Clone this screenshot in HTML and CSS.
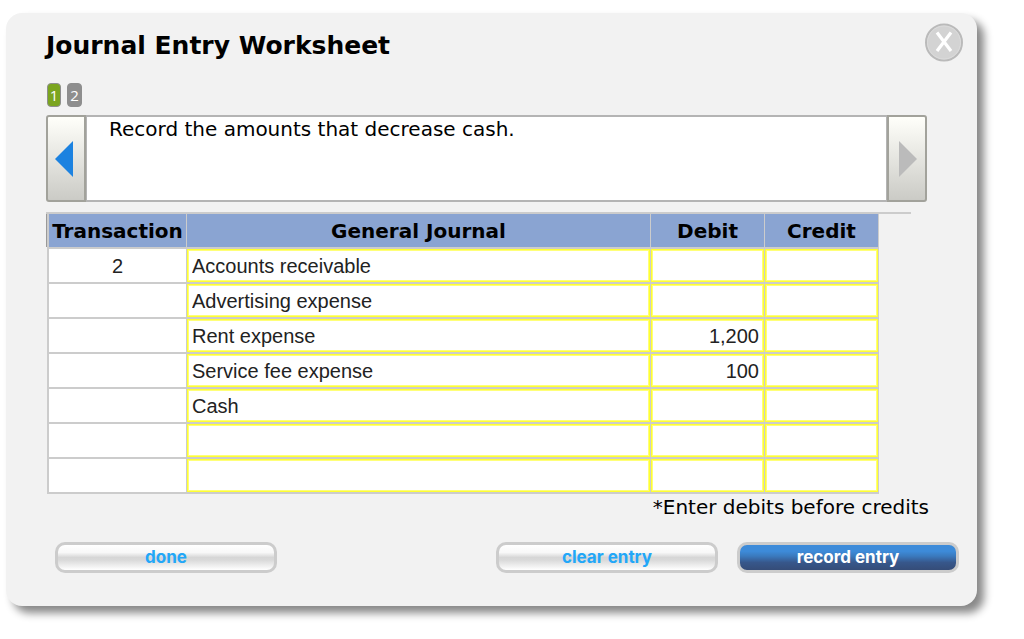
FILE: index.html
```html
<!DOCTYPE html>
<html lang="en">
<head>
<meta charset="utf-8">
<meta name="viewport" content="width=device-width, initial-scale=1">
<title>Journal Entry Worksheet</title>
<link rel="stylesheet" href="styles.css">
</head>
<body>
<main class="dialog">
  <header class="dialog-header">
    <h1 class="title">Journal Entry Worksheet</h1>
    <button class="close" type="button" aria-label="Close">
      <svg viewBox="0 0 40 40" width="40" height="40" aria-hidden="true">
        <circle cx="20" cy="20.5" r="18" fill="#d3d3d3" stroke="#bababa" stroke-width="2"/>
        <circle cx="20" cy="20.5" r="16.5" fill="none" stroke="#dcdcdc" stroke-width="1"/>
        <path d="M13 10.5 27 29M27 10.5 13 29" stroke="#fff" stroke-width="3.2" fill="none"/>
      </svg>
    </button>
  </header>
  <nav class="steps">
    <button class="step step-current" type="button" aria-current="step">1</button>
    <button class="step" type="button">2</button>
  </nav>
  <section class="prompt">
    <button class="arrow arrow-prev" type="button" aria-label="Previous">
      <svg viewBox="0 0 18 36" width="18" height="36" aria-hidden="true"><path d="M18 0V36L0 18Z" fill="#1c82e0"/></svg>
    </button>
    <p class="prompt-text">Record the amounts that decrease cash.</p>
    <button class="arrow arrow-next" type="button" aria-label="Next" disabled>
      <svg viewBox="0 0 18 36" width="18" height="36" aria-hidden="true"><path d="M0 0V36L18 18Z" fill="#bbb"/></svg>
    </button>
  </section>
  <div class="journal-wrap">
    <table class="journal">
      <colgroup><col class="col-trans"><col class="col-name"><col class="col-amount"><col class="col-amount"></colgroup>
      <thead>
        <tr><th scope="col">Transaction</th><th scope="col">General Journal</th><th scope="col">Debit</th><th scope="col">Credit</th></tr>
      </thead>
      <tbody>
        <tr><td>2</td><td><input class="field" aria-label="Account 1" value="Accounts receivable"></td><td><input class="field amount" aria-label="Debit 1"></td><td><input class="field amount" aria-label="Credit 1"></td></tr>
        <tr><td></td><td><input class="field" aria-label="Account 2" value="Advertising expense"></td><td><input class="field amount" aria-label="Debit 2"></td><td><input class="field amount" aria-label="Credit 2"></td></tr>
        <tr><td></td><td><input class="field" aria-label="Account 3" value="Rent expense"></td><td><input class="field amount" aria-label="Debit 3" value="1,200"></td><td><input class="field amount" aria-label="Credit 3"></td></tr>
        <tr><td></td><td><input class="field" aria-label="Account 4" value="Service fee expense"></td><td><input class="field amount" aria-label="Debit 4" value="100"></td><td><input class="field amount" aria-label="Credit 4"></td></tr>
        <tr><td></td><td><input class="field" aria-label="Account 5" value="Cash"></td><td><input class="field amount" aria-label="Debit 5"></td><td><input class="field amount" aria-label="Credit 5"></td></tr>
        <tr><td></td><td><input class="field" aria-label="Account 6"></td><td><input class="field amount" aria-label="Debit 6"></td><td><input class="field amount" aria-label="Credit 6"></td></tr>
        <tr><td></td><td><input class="field" aria-label="Account 7"></td><td><input class="field amount" aria-label="Debit 7"></td><td><input class="field amount" aria-label="Credit 7"></td></tr>
      </tbody>
    </table>
  </div>
  <p class="note">*Enter debits before credits</p>
  <footer class="actions">
    <button class="action" type="button">done</button>
    <button class="action action-clear" type="button">clear entry</button>
    <button class="action action-primary" type="button">record entry</button>
  </footer>
</main>
</body>
</html>
```
FILE: styles.css
```css
* { box-sizing: border-box; }
body {
  margin: 0;
  padding: 13px 47px 33px 6px;
  background: #fff;
  color: #000;
  font-family: Verdana, "DejaVu Sans", sans-serif;
}
button, input { font: inherit; margin: 0; }
.dialog {
  padding: 9px 13px 33px 40px;
  background: #f2f2f2;
  border-radius: 16px;
  box-shadow: 7px 7px 9px #888;
}
.dialog-header {
  display: flex;
  justify-content: space-between;
  align-items: flex-start;
}
.title {
  margin: 9px 0 0;
  font-size: 25px;
  line-height: 30px;
}
.close {
  padding: 0;
  border: 0;
  background: none;
  line-height: 0;
}
.steps {
  display: flex;
  gap: 6px;
  margin: 21px 0 8px 1px;
}
.step {
  width: 15px;
  height: 24px;
  padding: 0;
  border: 1px solid #8e8e8e;
  border-radius: 4px;
  background: #8e8e8e;
  color: #fff;
  font-family: "Open Sans", sans-serif;
  font-size: 15px;
  line-height: 22px;
}
.step-current {
  width: 14px;
  background: #7ba51f;
}
.prompt {
  display: flex;
  height: 87px;
  margin-right: 37px;
}
.prompt-text {
  flex: 1;
  margin: 0;
  padding: 1px 22px;
  border: solid #b4b4b4;
  border-width: 2px 1px;
  background: #fff;
  font-size: 20px;
  line-height: 22px;
}
.arrow {
  display: flex;
  justify-content: center;
  align-items: center;
  width: 40px;
  padding: 0;
  border: 2px solid #a2a29b;
  background: linear-gradient(#fffffa, #cbcbc6);
}
.arrow-prev {
  padding-right: 4px;
  border-radius: 3px 0 0 3px;
}
.arrow-next {
  padding-left: 2px;
  border-radius: 0 3px 3px 0;
}
.journal-wrap {
  margin: 10px 53px 0 0;
  padding-left: 1px;
  border-top: 2px solid #ccc;
  background: linear-gradient(#999, #999) no-repeat 0 0 / 1px 33px;
}
.journal {
  width: calc(100% - 32px);
  table-layout: fixed;
  border-spacing: 0;
  border-left: 2px solid #ccc;
}
.col-trans { width: 138px; }
.col-amount { width: 114px; }
.journal th, .journal td {
  height: 35px;
  padding: 0;
  border: solid #ccc;
  border-width: 0 1px 2px 0;
  background: #fff;
  text-align: center;
}
.journal th {
  background: #8aa4d2;
  font-size: 20px;
  line-height: 22px;
}
.journal td {
  color: #222;
  font-family: "Liberation Sans", Arial, sans-serif;
  font-size: 20px;
  line-height: 22px;
}
.field {
  display: block;
  width: 100%;
  height: 33px;
  padding: 2px 4px 0;
  border: 1px solid #ff3;
  box-shadow: inset 0 0 0 1px #ffff78;
  background: #fff;
  color: inherit;
}
.amount { text-align: right; }
.note {
  margin: 2px 35px 0 0;
  font-size: 20px;
  line-height: 22px;
  text-align: right;
}
.actions {
  display: flex;
  gap: 19px;
  margin: 24px 5px 0 9px;
}
.action {
  width: 222px;
  height: 31px;
  padding: 0 0 2px;
  border: 3px solid #ccc;
  border-radius: 10px;
  background: linear-gradient(#fff, #f8f8f8 30%, #d6d6d6 50%, #d9d9d9 60%, #fff);
  color: #22a7f8;
  font-family: Inter, "Liberation Sans", sans-serif;
  font-size: 17px;
  font-weight: 700;
  line-height: 22px;
}
.action-clear { margin-left: auto; }
.action-primary {
  background: linear-gradient(#3d8bd9 25%, #3a79bd 45%, #37578b 70%, #354c78);
  color: #fff;
}
```
